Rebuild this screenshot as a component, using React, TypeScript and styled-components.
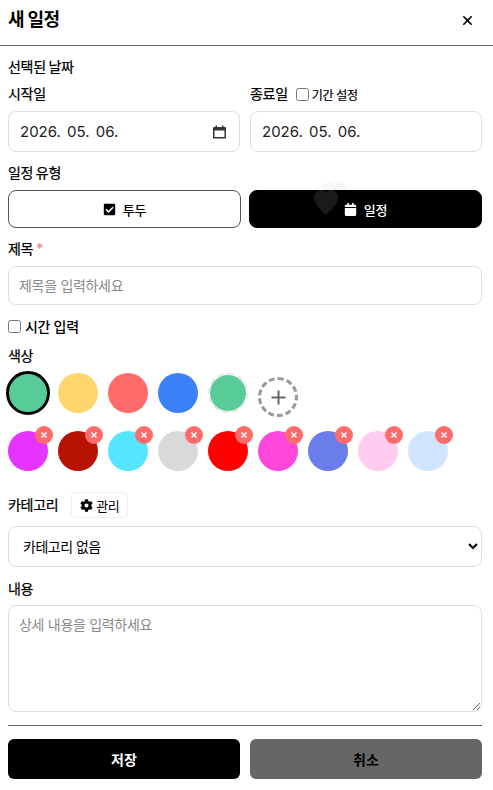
import React from "react";
import styled, { createGlobalStyle } from "styled-components";
import { FaCalendar, FaCheckSquare, FaCog } from "react-icons/fa";
import { IoClose } from "react-icons/io5";

const FONT = `Inter, "Noto Sans CJK KR", sans-serif`;

const GlobalStyle = createGlobalStyle`
  html, body {
    margin: 0;
    padding: 0;
    background: #fff;
    color: #000;
    font-family: ${FONT};
  }
  * { box-sizing: border-box; }
`;

const Page = styled.div`
  width: 493px;
  height: 790px;
  overflow: hidden;
  position: relative;
`;

const Header = styled.header`
  height: 46px;
  padding: 0 17px 5px 8px;
  border-bottom: 1px solid #666;
  display: flex;
  align-items: center;
  justify-content: space-between;
`;

const Title = styled.h2`
  margin: 0;
  font-size: 18px;
  font-weight: 700;
  letter-spacing: -0.6px;
  line-height: 24px;
`;

const CloseButton = styled.button`
  border: 0;
  padding: 0;
  background: none;
  display: flex;
  color: #000;
`;

const Body = styled.div`
  padding: 11px 11px 0 8px;
  display: flex;
  flex-direction: column;
`;

const Label = styled.div<{ $mb?: number }>`
  font-size: 14px;
  font-weight: 400;
  -webkit-text-stroke: 0.25px #000;
  line-height: 20px;
  letter-spacing: -0.3px;
  word-spacing: -1px;
  margin-bottom: ${({ $mb }) => $mb ?? 7}px;
`;

const Columns = styled.div`
  display: flex;
  gap: 10px;
`;

const Column = styled.div`
  flex: 1;
  min-width: 0;
`;

const LabelRow = styled.div`
  display: flex;
  align-items: center;
  height: 20px;
  margin-bottom: 7px;
`;

const InlineCheck = styled.label`
  display: flex;
  align-items: center;
  margin-left: 8px;
  font-size: 12px;
  font-weight: 400;
  -webkit-text-stroke: 0.2px #000;
  letter-spacing: -0.3px;
  gap: 3px;

  input {
    margin: 0;
    width: 13px;
    height: 13px;
  }
`;

const DateBox = styled.div`
  height: 41px;
  padding: 0 13px 0 11px;
  border: 1px solid #ddd;
  border-radius: 8px;
  display: flex;
  align-items: center;
  justify-content: space-between;
  margin-bottom: 11px;
`;

const DateText = styled.span`
  font-size: 15px;
  word-spacing: 2px;
  color: #222;
`;

const TypeRow = styled.div`
  display: flex;
  gap: 8px;
  margin-bottom: 11px;
`;

const TypeButton = styled.button<{ $active?: boolean }>`
  flex: 1;
  height: 38px;
  border-radius: 8px;
  border: 1px solid ${({ $active }) => ($active ? "#000" : "#555")};
  background: ${({ $active }) => ($active ? "#000" : "#fff")};
  color: ${({ $active }) => ($active ? "#fff" : "#000")};
  font-family: ${FONT};
  font-size: 13px;
  font-weight: 500;
  letter-spacing: -0.3px;
  display: flex;
  align-items: center;
  justify-content: center;
  gap: 7px;
  padding: 0;
`;

const Star = styled.span`
  color: #ff6b6b;
  -webkit-text-stroke: 0;
  margin-left: 3px;
`;

const TextField = styled.input`
  display: block;
  width: 100%;
  height: 39px;
  padding: 0 10px;
  border: 1px solid #ddd;
  border-radius: 8px;
  font-family: ${FONT};
  font-size: 14px;
  letter-spacing: -0.3px;
  background: #fff;

  &::placeholder {
    color: #8a8a8a;
  }
`;

const CheckLine = styled.label`
  display: flex;
  align-items: center;
  gap: 4px;
  margin: 11px 0 10px;
  height: 20px;
  font-size: 14px;
  font-weight: 500;
  letter-spacing: -0.3px;

  input {
    margin: 0;
    width: 13px;
    height: 13px;
  }
`;

const Swatches = styled.div<{ $mb: number }>`
  display: flex;
  align-items: flex-start;
  gap: 10px;
  margin-bottom: ${({ $mb }) => $mb}px;
`;

const Swatch = styled.div<{ $color: string; $selected?: boolean; $ring?: boolean }>`
  width: 40px;
  height: 40px;
  flex: none;
  position: relative;
  border-radius: 50%;
  background: ${({ $color }) => $color};
  background-clip: ${({ $ring }) => ($ring ? "padding-box" : "border-box")};
  border: ${({ $ring }) => ($ring ? "2px dashed #e4e4e4" : "none")};
  outline: ${({ $selected }) => ($selected ? "3px solid #000" : "none")};
  outline-offset: -1px;
`;

const AddSwatch = styled.div`
  width: 40px;
  height: 40px;
  flex: none;
  margin-top: 4px;
  border-radius: 50%;
  border: 3px dashed #999;
  color: #666;
  display: flex;
  align-items: center;
  justify-content: center;
`;

const RemoveBadge = styled.span`
  position: absolute;
  top: -5px;
  right: -5px;
  width: 18px;
  height: 18px;
  border-radius: 50%;
  background: #ff6b6b;
  color: #fff;
  display: flex;
  align-items: center;
  justify-content: center;
`;

const CategoryHead = styled.div`
  display: flex;
  align-items: center;
  gap: 13px;
  margin-bottom: 8px;
`;

const ManageButton = styled.button`
  height: 26px;
  width: 57px;
  padding: 0;
  border: 1px solid #eee;
  border-radius: 4px;
  background: #fff;
  font-family: ${FONT};
  font-size: 13px;
  letter-spacing: -0.3px;
  color: #000;
  display: flex;
  align-items: center;
  justify-content: center;
  gap: 3px;
`;

const SelectField = styled.select`
  display: block;
  width: 100%;
  height: 41px;
  padding: 0 10px;
  border: 1px solid #ddd;
  border-radius: 8px;
  background: #fff;
  font-family: ${FONT};
  font-size: 14px;
  letter-spacing: -0.5px;
  color: #000;
  margin-bottom: 12px;
`;

const TextArea = styled.textarea`
  display: block;
  width: 100%;
  height: 107px;
  padding: 8px 10px;
  border: 1px solid #ddd;
  border-radius: 8px;
  font-family: ${FONT};
  font-size: 14px;
  letter-spacing: -0.3px;
  resize: vertical;

  &::placeholder {
    color: #8a8a8a;
  }
`;

const Divider = styled.hr`
  width: 100%;
  margin: 13px 0;
  border: 0;
  border-top: 1px solid #666;
`;

const Actions = styled.div`
  display: flex;
  gap: 10px;
`;

const ActionButton = styled.button<{ $bg: string; $fg: string }>`
  flex: 1;
  height: 40px;
  border: 0;
  border-radius: 6px;
  background: ${({ $bg }) => $bg};
  color: ${({ $fg }) => $fg};
  font-family: ${FONT};
  font-size: 14px;
  font-weight: 700;
  padding: 0;
`;

// stray hearts that float over the type buttons in the capture
const FloatingHearts = styled.svg`
  position: absolute;
  left: 311px;
  top: 180px;
  width: 40px;
  height: 38px;
`;

const baseColors = ["#ffd66e", "#ff6b6b", "#3b82f6"];
const customColors = [
  "#e633ff",
  "#b81204",
  "#55e5ff",
  "#d9d9d9",
  "#ff0000",
  "#ff47dc",
  "#6b7deb",
  "#ffcbef",
  "#d0e3ff",
];

const CrossMark = () => (
  <svg width="8" height="8" viewBox="0 0 8 8" fill="none" stroke="currentColor" strokeWidth="1.5">
    <path d="M1.5 1.5l5 5M6.5 1.5l-5 5" />
  </svg>
);

export default function App() {
  return (
    <Page>
      <GlobalStyle />
      <Header>
        <Title>새 일정</Title>
        <CloseButton>
          <IoClose size={17} />
        </CloseButton>
      </Header>
      <Body>
        <Label $mb={7}>선택된 날짜</Label>
        <Columns>
          <Column>
            <LabelRow>
              <Label $mb={0}>시작일</Label>
            </LabelRow>
            <DateBox>
              <DateText>2026. 05. 06.</DateText>
              <svg width="13" height="14" viewBox="0 0 13 14" fill="#333">
                <path d="M2.5 0.5h1.5V2h5V0.5h1.5V2h1.5a1 1 0 0 1 1 1v9.5a1 1 0 0 1-1 1H1a1 1 0 0 1-1-1V3a1 1 0 0 1 1-1h1.500zM1.500 5.500v6.500h10V5.500z" />
              </svg>
            </DateBox>
          </Column>
          <Column>
            <LabelRow>
              <Label $mb={0}>종료일</Label>
              <InlineCheck>
                <input type="checkbox" />
                기간 설정
              </InlineCheck>
            </LabelRow>
            <DateBox>
              <DateText>2026. 05. 06.</DateText>
            </DateBox>
          </Column>
        </Columns>

        <Label>일정 유형</Label>
        <TypeRow>
          <TypeButton>
            <FaCheckSquare size={13} />
            투두
          </TypeButton>
          <TypeButton $active>
            <FaCalendar size={13} />
            일정
          </TypeButton>
        </TypeRow>

        <Label>
          제목<Star>*</Star>
        </Label>
        <TextField placeholder="제목을 입력하세요" />

        <CheckLine>
          <input type="checkbox" />
          시간 입력
        </CheckLine>

        <Label>색상</Label>
        <Swatches $mb={14}>
          <Swatch $color="#57cc99" $selected />
          {baseColors.map((c) => (
            <Swatch key={c} $color={c} />
          ))}
          <Swatch $color="#57cc99" $ring />
          <AddSwatch>
            <svg width="15" height="15" viewBox="0 0 15 15" stroke="currentColor" strokeWidth="2">
              <path d="M7.5 0.500v14M0.500 7.500h14" />
            </svg>
          </AddSwatch>
        </Swatches>
        <Swatches $mb={21}>
          {customColors.map((c) => (
            <Swatch key={c} $color={c}>
              <RemoveBadge>
                <CrossMark />
              </RemoveBadge>
            </Swatch>
          ))}
        </Swatches>

        <CategoryHead>
          <Label $mb={0}>카테고리</Label>
          <ManageButton>
            <FaCog size={13} />
            관리
          </ManageButton>
        </CategoryHead>
        <SelectField>
          <option>카테고리 없음</option>
        </SelectField>

        <Label $mb={6}>내용</Label>
        <TextArea placeholder="상세 내용을 입력하세요" />

        <Divider />

        <Actions>
          <ActionButton $bg="#000" $fg="#fff">저장</ActionButton>
          <ActionButton $bg="#666" $fg="#000">취소</ActionButton>
        </Actions>
      </Body>
      <FloatingHearts viewBox="0 0 40 38">
        <path d="M11 10C11 5 15 2 19 2C21 2 23 3 24 5C25 3 27 2 29 2C33 2 36 5 36 10Z" fill="#f7f7f7" />
        <path d="M15 35C9 29 3 24 3 17C3 13 7 10 10 10C12 10 14 11 15 13C16 11 18 10 20 10C24 10 27 13 27 17C27 24 21 29 15 35Z" fill="#1a1a1a" />
      </FloatingHearts>
    </Page>
  );
}
